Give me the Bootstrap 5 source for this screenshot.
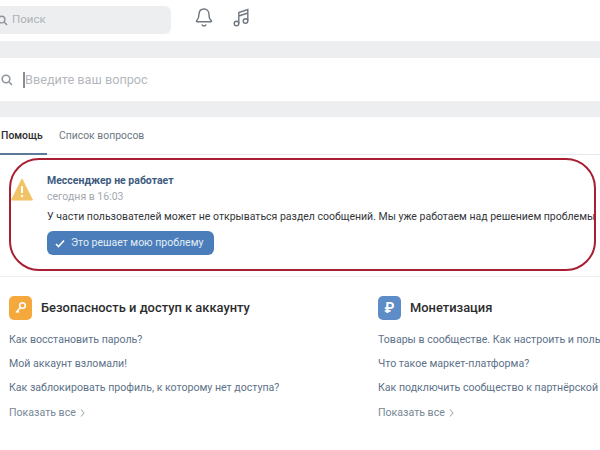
<!DOCTYPE html>
<html lang="ru">
<head>
  <meta charset="UTF-8">
  <title>Помощь</title>
  <link href="https://cdn.jsdelivr.net/npm/bootstrap@5.3.0/dist/css/bootstrap.min.css" rel="stylesheet">
  <style>
    html, body { width: 600px; height: 450px; overflow: hidden; }
    body { font-family: Roboto, "Liberation Sans", sans-serif; font-size: 11.5px; color: #2c2d2e; background: #fff; }
    .top-bar { height: 41px; padding-top: 6px; }
    .top-search { width: 179px; height: 28px; margin-left: -8px; padding-left: 5px; background: #edeef0; border-radius: 6px; color: #aeb2b8; font-size: 11.5px; }
    .top-icons { margin-left: 24px; gap: 20px; margin-top: 1px; }
    .gray-band { height: 17px; background: #edeef0; }
    .gray-band.lower { height: 16px; }
    .ask-row { height: 43px; padding-left: 1px; color: #b4b8bd; font-size: 12.7px; }
    .caret-line { width: 2px; height: 16px; background: #8a8d91; margin-left: 10px; }
    .tab-row { height: 38px; font-size: 10.4px; gap: 12px; border-bottom: 1px solid #e7e8ec; }
    .tab-item { height: 38px; line-height: 38px; color: #6d7885; }
    .tab-item.active { color: #2c2d2e; font-weight: 500; padding: 0 1px; width: 47px; border-bottom: 2px solid #5b7a99; margin-bottom: -1px; }
    .notice-box { width: 587px; height: 113px; margin: 3px 0 0 9px; border: 2px solid #a81e32; border-radius: 30px; padding: 11px 0 0 0; overflow: hidden; white-space: nowrap; }
    .notice-icon { width: 36px; flex-shrink: 0; padding-top: 7px; }
    .notice-title { color: #3d5a7e; font-weight: 700; font-size: 10.5px; line-height: 16px; margin-top: 2px; }
    .notice-date { color: #a3a9b0; font-size: 10.5px; line-height: 16px; margin-top: 0; }
    .notice-text { font-size: 10.5px; line-height: 16px; margin-top: 4px; color: #33363a; }
    .solve-btn { background: #4a7db9; color: #e4edf6; border: 0; border-radius: 6px; font-size: 10.5px; height: 24px; width: 167px; padding: 0 0 0 8px; margin-top: 6px; gap: 6px; }
    .section-line { height: 6px; border-bottom: 1px solid #eceded; }
    .help-grid { padding: 19px 0 0 9px; gap: 24px; white-space: nowrap; }
    .help-col { width: 345px; flex-shrink: 0; overflow: hidden; }
    .help-col.second { width: 222px; }
    .help-head { gap: 9px; font-size: 12.9px; font-weight: 500; color: #2c2d2e; height: 24px; }
    .help-badge { width: 23px; height: 24px; border-radius: 5px; color: #fff; flex-shrink: 0; }
    .badge-key { background: #f5a83c; }
    .badge-rub { background: #5d8cc7; font-size: 14px; font-weight: 700; }
    .help-link { display: block; font-size: 10.6px; line-height: 16px; color: #5d7289; text-decoration: none; margin-top: 8px; }
    .help-head + .help-link { margin-top: 12px; }
    .show-all { color: #768796; gap: 4px; margin-top: 9px; }
  </style>
</head>
<body>
  <!-- Шапка -->
  <div class="top-bar d-flex">
    <div class="top-search d-flex align-items-center gap-1">
      <svg width="11" height="11" viewBox="0 0 12 12" fill="none" stroke="#8f959c" stroke-width="1.6"><circle cx="5" cy="5" r="3.6"/><path d="M8 8l3 3"/></svg>
      <span>Поиск</span>
    </div>
    <div class="top-icons d-flex align-items-start">
      <svg width="18" height="21" viewBox="0 0 18 21" fill="none" stroke="#6f7780" stroke-width="1.4" stroke-linejoin="round"><path d="M9 2c-3.3 0-5 2.4-5 5.5 0 3-1 4.6-2.4 6.2-.3.4-.1 1 .5 1h13.8c.6 0 .8-.6.5-1C14 12.100 14 10.500 14 7.500 14 4.400 12.300 2 9 2z"/><path d="M6.800 17.500c.5 1 1.300 1.500 2.200 1.500s1.700-.5 2.200-1.500"/></svg>
      <svg width="17" height="21" viewBox="0 0 17 21" fill="none" stroke="#6f7780" stroke-width="1.4"><circle cx="3.500" cy="16.500" r="2.300"/><circle cx="12.500" cy="14" r="2.300"/><path d="M5.800 16.500V5.500L14.800 2.500V14M5.800 9l9-3"/></svg>
    </div>
  </div>

  <div class="gray-band"></div>

  <div class="ask-row d-flex align-items-center">
    <svg width="12" height="12" viewBox="0 0 12 12" fill="none" stroke="#8f959c" stroke-width="1.6"><circle cx="5" cy="5" r="3.800"/><path d="M8 8l3 3"/></svg>
    <span class="caret-line"></span>
    <span>Введите ваш вопрос</span>
  </div>

  <div class="gray-band lower"></div>

  <div class="tab-row d-flex">
    <div class="tab-item active">Помощь</div>
    <div class="tab-item">Список вопросов</div>
  </div>

  <!-- Уведомление -->
  <div class="notice-box d-flex">
    <div class="notice-icon">
      <svg width="22" height="23" viewBox="0 0 22 23"><path d="M11 1L21.500 22H.5z" fill="#f2c266" stroke="#f2c266" stroke-width="1" stroke-linejoin="round"/><path d="M11 8v7" stroke="#fff" stroke-width="2"/><circle cx="11" cy="18" r="1.200" fill="#fff"/></svg>
    </div>
    <div>
      <div class="notice-title">Мессенджер не работает</div>
      <div class="notice-date">сегодня в 16:03</div>
      <div class="notice-text">У части пользователей может не открываться раздел сообщений. Мы уже работаем над решением проблемы</div>
      <button type="button" class="solve-btn btn d-flex align-items-center">
        <svg width="10" height="9" viewBox="0 0 10 9" fill="none" stroke="#fff" stroke-width="1.600"><path d="M1 5l2.500 2.500L9 1.500"/></svg>
        <span>Это решает мою проблему</span>
      </button>
    </div>
  </div>

  <div class="section-line"></div>

  <!-- Разделы помощи -->
  <div class="help-grid d-flex">
    <div class="help-col">
      <div class="help-head d-flex align-items-center">
        <span class="help-badge badge-key d-flex align-items-center justify-content-center">
          <svg width="13" height="14" viewBox="0 0 13 14" fill="none" stroke="#fff" stroke-width="1.600"><circle cx="8.500" cy="4.500" r="2.800"/><path d="M6.500 6.500L2 11.500M3.500 10l1.500 1.500"/></svg>
        </span>
        <span>Безопасность и доступ к аккаунту</span>
      </div>
      <a class="help-link" href="#">Как восстановить пароль?</a>
      <a class="help-link" href="#">Мой аккаунт взломали!</a>
      <a class="help-link" href="#">Как заблокировать профиль, к которому нет доступа?</a>
      <a class="help-link show-all d-flex align-items-center" href="#">Показать все
        <svg width="5" height="8" viewBox="0 0 5 8" fill="none" stroke="#a9b2bb" stroke-width="1.100"><path d="M1 .5L4 4 1 7.500"/></svg>
      </a>
    </div>
    <div class="help-col second">
      <div class="help-head d-flex align-items-center">
        <span class="help-badge badge-rub d-flex align-items-center justify-content-center">₽</span>
        <span>Монетизация</span>
      </div>
      <a class="help-link" href="#">Товары в сообществе. Как настроить и поль</a>
      <a class="help-link" href="#">Что такое маркет-платформа?</a>
      <a class="help-link" href="#">Как подключить сообщество к партнёрской</a>
      <a class="help-link show-all d-flex align-items-center" href="#">Показать все
        <svg width="5" height="8" viewBox="0 0 5 8" fill="none" stroke="#a9b2bb" stroke-width="1.100"><path d="M1 .5L4 4 1 7.500"/></svg>
      </a>
    </div>
  </div>

  <script src="https://cdn.jsdelivr.net/npm/bootstrap@5.3.0/dist/js/bootstrap.bundle.min.js"></script>
</body>
</html>
